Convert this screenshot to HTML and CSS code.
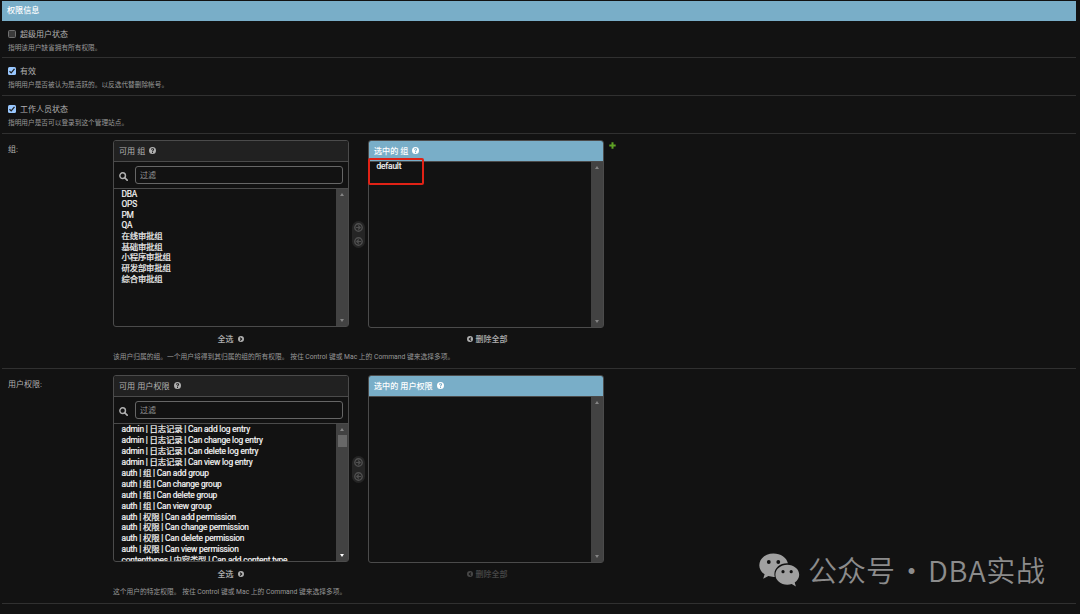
FILE: index.html
```
<!DOCTYPE html>
<html>
<head>
    <meta charset="utf-8">
    <title>权限信息</title>
    <link rel="stylesheet" href="styles.css">
</head>
<body>
    <svg class="sprite">
        <symbol id="help" viewBox="0 0 16 16">
            <path fill-rule="evenodd" d="M8 0a8 8 0 1 0 0 16A8 8 0 0 0 8 0zM6.9 11.2h2.3v2.3H6.9zM4.5 5.8C4.6 3.6 6 2.6 8.1 2.6c2 0 3.6 1.2 3.6 3.1 0 2.3-2.5 2.5-2.5 4.3H6.9c0-2.6 2.3-2.9 2.3-4.1 0-.7-.5-1.1-1.2-1.1-.8 0-1.2.4-1.3 1.3z"/>
        </symbol>
        <symbol id="search" viewBox="0 0 16 16">
            <circle cx="6.5" cy="6.5" r="5" fill="none" stroke="currentColor" stroke-width="2.6"/>
            <path d="M10.2 10.2l4.3 4.3" stroke="currentColor" stroke-width="3" stroke-linecap="round"/>
        </symbol>
        <symbol id="right" viewBox="0 0 16 16">
            <path fill-rule="evenodd" d="M8 0a8 8 0 1 0 0 16A8 8 0 0 0 8 0zM6.5 3L12 8l-5.5 5-2-2 3-3-3-3z"/>
        </symbol>
        <symbol id="arrow" viewBox="0 0 16 16">
            <circle cx="8" cy="8" r="6.6" fill="none" stroke="currentColor" stroke-width="2.4"/>
            <path d="M3.5 8h7M7.5 4.5L11 8l-3.5 3.5" fill="none" stroke="currentColor" stroke-width="2.2"/>
        </symbol>
    </svg>

    <div class="module">
        <h2>权限信息</h2>

        <div class="form-row check-row">
            <div class="check"><span class="box"></span><label>超级用户状态</label></div>
            <div class="help">指明该用户缺省拥有所有权限。</div>
        </div>
        <div class="form-row check-row">
            <div class="check">
                <span class="box checked"><svg viewBox="0 0 8 8"><path d="M1.5 4.2l1.7 1.7 3.3-4"/></svg></span>
                <label>有效</label>
            </div>
            <div class="help">指明用户是否被认为是活跃的。以反选代替删除帐号。</div>
        </div>
        <div class="form-row check-row">
            <div class="check">
                <span class="box checked"><svg viewBox="0 0 8 8"><path d="M1.5 4.2l1.7 1.7 3.3-4"/></svg></span>
                <label>工作人员状态</label>
            </div>
            <div class="help">指明用户是否可以登录到这个管理站点。</div>
        </div>

        <div class="form-row selector-row">
            <label class="row-label">组:</label>
            <div class="field">
                <div class="selector">
                    <div class="column">
                        <div class="panel available">
                            <h3>可用 组 <svg class="icon"><use href="#help"/></svg></h3>
                            <div class="filter"><svg><use href="#search"/></svg><div class="input">过滤</div></div>
                            <div class="select">
                                <ul class="options">
                                    <li class="latin">DBA</li>
                                    <li class="latin">OPS</li>
                                    <li class="latin">PM</li>
                                    <li class="latin">QA</li>
                                    <li>在线审批组</li>
                                    <li>基础审批组</li>
                                    <li>小程序审批组</li>
                                    <li>研发部审批组</li>
                                    <li>综合审批组</li>
                                </ul>
                                <div class="scrollbar"><i class="up"></i><i class="down"></i></div>
                            </div>
                        </div>
                        <div class="all">全选 <svg class="icon"><use href="#right"/></svg></div>
                    </div>
                    <div class="chooser">
                        <svg><use href="#arrow"/></svg>
                        <svg class="flip"><use href="#arrow"/></svg>
                    </div>
                    <div class="column">
                        <div class="panel chosen">
                            <h3>选中的 组 <svg class="icon"><use href="#help"/></svg></h3>
                            <div class="select">
                                <ul class="options">
                                    <li class="latin">default</li>
                                </ul>
                                <div class="scrollbar"><i class="up"></i><i class="down"></i></div>
                            </div>
                            <div class="highlight"></div>
                        </div>
                        <div class="all"><svg class="icon flip"><use href="#right"/></svg> 删除全部</div>
                    </div>
                    <svg class="add" viewBox="0 0 7 7"><path d="M3.5 0.3v6.4M0.3 3.5h6.4"/></svg>
                </div>
                <div class="help">该用户归属的组。一个用户将得到其归属的组的所有权限。 按住 Control 键或 Mac 上的 Command 键来选择多项。</div>
            </div>
        </div>

        <div class="form-row selector-row">
            <label class="row-label">用户权限:</label>
            <div class="field">
                <div class="selector">
                    <div class="column">
                        <div class="panel available">
                            <h3>可用 用户权限 <svg class="icon"><use href="#help"/></svg></h3>
                            <div class="filter"><svg><use href="#search"/></svg><div class="input">过滤</div></div>
                            <div class="select">
                                <ul class="options">
                                    <li>admin | 日志记录 | Can add log entry</li>
                                    <li>admin | 日志记录 | Can change log entry</li>
                                    <li>admin | 日志记录 | Can delete log entry</li>
                                    <li>admin | 日志记录 | Can view log entry</li>
                                    <li>auth | 组 | Can add group</li>
                                    <li>auth | 组 | Can change group</li>
                                    <li>auth | 组 | Can delete group</li>
                                    <li>auth | 组 | Can view group</li>
                                    <li>auth | 权限 | Can add permission</li>
                                    <li>auth | 权限 | Can change permission</li>
                                    <li>auth | 权限 | Can delete permission</li>
                                    <li>auth | 权限 | Can view permission</li>
                                    <li>contenttypes | 内容类型 | Can add content type</li>
                                </ul>
                                <div class="scrollbar active"><i class="up"></i><b></b><i class="down"></i></div>
                            </div>
                        </div>
                        <div class="all">全选 <svg class="icon"><use href="#right"/></svg></div>
                    </div>
                    <div class="chooser">
                        <svg><use href="#arrow"/></svg>
                        <svg class="flip"><use href="#arrow"/></svg>
                    </div>
                    <div class="column">
                        <div class="panel chosen">
                            <h3>选中的 用户权限 <svg class="icon"><use href="#help"/></svg></h3>
                            <div class="select">
                                <ul class="options"></ul>
                                <div class="scrollbar"><i class="up"></i><i class="down"></i></div>
                            </div>
                        </div>
                        <div class="all disabled"><svg class="icon flip"><use href="#right"/></svg> 删除全部</div>
                    </div>
                </div>
                <div class="help">这个用户的特定权限。 按住 Control 键或 Mac 上的 Command 键来选择多项。</div>
            </div>
        </div>
    </div>

    <div class="watermark">
        <svg viewBox="0 0 41 34">
            <path d="M14.5 0.5C6.5 0.5 0.3 5.7 0.3 12.2c0 3.8 2 6.9 5.3 9.1L4.2 25.8l5.2-2.7c1.8.5 3.4.8 5.2.8h1.2c-.3-1-.4-2-.4-3 0-6 5.7-10.7 12.5-10.7h1C27.7 4.6 21.7.5 14.5.5z"/>
            <path d="M40.2 21.7c0-5.6-5.4-10-11.9-10s-11.9 4.4-11.9 10 5.3 10 11.9 10c1.5 0 3-.3 4.4-.7l4.2 2.4-1.2-3.9c2.8-1.9 4.5-4.7 4.5-7.8z"/>
            <g class="eyes"><circle cx="9.8" cy="9" r="1.9"/><circle cx="19.3" cy="9" r="1.9"/><circle cx="24" cy="18.7" r="1.6"/><circle cx="32.2" cy="18.7" r="1.6"/></g>
        </svg>
        <span class="account">公众号</span>
        <span class="dot">·</span>
        <span class="name">DBA实战</span>
    </div>
</body>
</html>
```
FILE: styles.css
```
* {
    box-sizing: border-box;
}
body {
    margin: 0;
    height: 614px;
    overflow: hidden;
    background: #121212;
    color: #b0b0b0;
    font-family: Roboto, "Noto Sans CJK SC", sans-serif;
    font-size: 8px;
    white-space: nowrap;
}
svg {
    display: block;
    fill: currentColor;
    flex: none;
}
.sprite {
    position: absolute;
    width: 0;
    height: 0;
}
.flip { transform: scaleX(-1); }
.module {
    margin: 0 4px 0 2px;
    padding-top: 1px;
}
h2 {
    margin: 0;
    height: 20px;
    padding-left: 5px;
    background: #79aec8;
    color: #fff;
    font-size: 8.1px;
    font-weight: 500;
    line-height: 19px;
}
.form-row {
    border-bottom: 1px solid #303030;
}
.check-row {
    height: 38px;
    padding: 6px 0 0 6px;
}
.check-row:nth-of-type(1) { height: 37px; }
.check {
    display: flex;
    align-items: center;
    gap: 4px;
    height: 13px;
}
.check label { margin-top: -1px; }
.box {
    width: 8px;
    height: 8px;
    border: 1px solid #707070;
    border-radius: 1.5px;
    background: #3b3b3b;
}
.box.checked {
    border: 0;
    background: #99c8ff;
}
.box path {
    fill: none;
    stroke: #202020;
    stroke-width: 1.3;
}
.help {
    color: #999;
    font-size: 6.75px;
    line-height: 10px;
}
.check-row .help {
    margin-top: 3px;
    font-size: 6.68px;
}

/* filtered select boxes */
.selector-row {
    display: flex;
    height: 235px;
    padding: 6px 0 0 6px;
}
.row-label {
    width: 105px;
    line-height: 19px;
}
.selector {
    display: flex;
    height: 212px;
}
.column {
    width: 236px;
}
.panel {
    position: relative;
    display: flex;
    flex-direction: column;
    height: 188px;
    border: 1px solid #4b4b4b;
    border-radius: 3px;
}
.available { height: 187px; }
h3 {
    display: flex;
    align-items: center;
    gap: 4px;
    height: 21px;
    margin: 0;
    padding: 0 0 1px 5px;
    border-bottom: 1px solid #4b4b4b;
    border-radius: 2px 2px 0 0;
    background: #212121;
    font-size: 8.1px;
    font-weight: 400;
}
.chosen h3 {
    background: #79aec8;
    color: #fff;
    font-weight: 500;
}
.icon {
    width: 7px;
    height: 7px;
}
.filter {
    display: flex;
    align-items: center;
    gap: 7px;
    height: 27px;
    padding: 0 5px;
    border-bottom: 1px solid #4b4b4b;
}
.filter svg {
    width: 9px;
    height: 9px;
    margin-top: 2px;
}
.input {
    flex: 1;
    height: 18px;
    padding-left: 4px;
    border: 1px solid #666;
    border-radius: 3px;
    color: #999;
    line-height: 17px;
}
.select {
    display: flex;
    flex: 1;
    min-height: 0;
    overflow: hidden;
}
.options {
    flex: 1;
    margin: 0;
    padding: 0 0 0 7.5px;
    overflow: hidden;
    list-style: none;
    color: #f4f4f4;
    font-size: 8.4px;
    letter-spacing: -0.18px;
    -webkit-text-stroke: 0.2px currentColor;
}
.options li {
    height: 10.95px;
    line-height: 10.95px;
}
.options .latin {
    height: 10.4px;
    line-height: 10.4px;
}
.chosen .latin { margin-top: -1px; }
.scrollbar {
    display: flex;
    flex-direction: column;
    align-items: center;
    width: 12px;
    padding: 4px 0;
    background: #424242;
}
.scrollbar i {
    border: 2.5px solid transparent;
}
.scrollbar .up {
    border-top: 0;
    border-bottom: 3px solid #858585;
}
.scrollbar .down {
    margin-top: auto;
    border-bottom: 0;
    border-top: 3px solid #858585;
}
.scrollbar.active .down { border-top-color: #fff; }
.scrollbar b {
    width: 9px;
    height: 12px;
    margin-top: 4px;
    background: #686868;
}
.all {
    display: flex;
    align-items: center;
    justify-content: center;
    gap: 4px;
    height: 24px;
    padding: 0 1px 1px 0;
    font-weight: 500;
}
.all .icon {
    width: 6px;
    height: 6px;
    margin-top: 1px;
}
.chosen + .all {
    gap: 3px;
    height: 23px;
    padding: 0 0 2px 2px;
}
.all.disabled { color: #484848; }
.chooser {
    display: flex;
    flex-direction: column;
    align-items: center;
    justify-content: space-between;
    width: 13px;
    height: 27px;
    margin: 81px 3px 0;
    padding: 2px 0;
    border-radius: 7px;
    background: #252525;
    color: #505050;
}
.chooser svg {
    width: 9px;
    height: 9px;
}
.add {
    width: 7px;
    height: 7px;
    margin: 2px 0 0 5px;
}
.add path {
    stroke: #5fa225;
    stroke-width: 2;
}
.highlight {
    position: absolute;
    left: -1px;
    top: 17px;
    width: 56px;
    height: 27px;
    border: 2px solid #e02216;
    border-radius: 2px;
}
.watermark {
    position: absolute;
    left: 759px;
    top: 553px;
    display: flex;
    align-items: center;
    height: 34px;
    color: #8c8c8c;
    font-family: "Noto Sans CJK SC", sans-serif;
    font-size: 29px;
    font-weight: 350;
    line-height: 34px;
}
.watermark svg {
    width: 41px;
    height: 34px;
    color: #a0a0a0;
}
.watermark span { margin-top: -2px; }
.eyes { fill: #121212; }
.account { padding-left: 8px; }
.dot {
    width: 33px;
    text-align: center;
}
.name { letter-spacing: 0.7px; }
```
